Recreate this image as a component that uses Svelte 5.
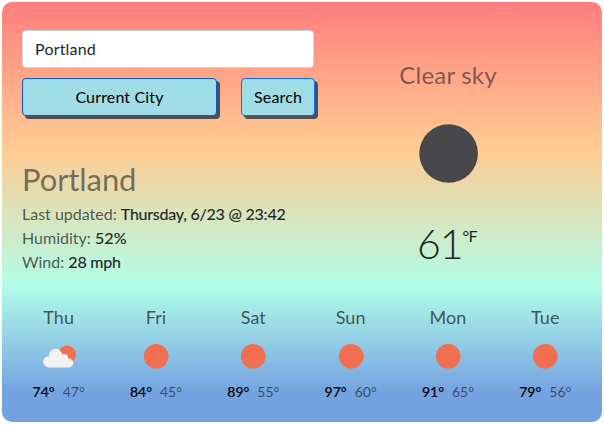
<script>
  let city = $state('Portland');
  const days = [
    { name: 'Thu', high: 74, low: 47, cloudy: true },
    { name: 'Fri', high: 84, low: 45 },
    { name: 'Sat', high: 89, low: 55 },
    { name: 'Sun', high: 97, low: 60 },
    { name: 'Mon', high: 91, low: 65 },
    { name: 'Tue', high: 79, low: 56 }
  ];
</script>

<main class="card">
  <div class="top">
    <section class="left">
      <form onsubmit={(e) => e.preventDefault()}>
        <input type="text" aria-label="City" bind:value={city} />
        <div class="buttons">
          <button type="button" class="current">Current City</button>
          <button type="submit" class="search">Search</button>
        </div>
      </form>
      <h1>Portland</h1>
      <ul>
        <li>Last updated: <span>Thursday, 6/23 @ 23:42</span></li>
        <li>Humidity: <span class="humidity">52%</span></li>
        <li>Wind: <span>28 mph</span></li>
      </ul>
    </section>
    <section class="now">
      <h2>Clear sky</h2>
      <svg class="moon" viewBox="0 0 60 60"><circle cx="30.6" cy="30.5" r="29.3" fill="#48484a" /></svg>
      <div class="temp"><span class="value">61</span><span class="unit">°F</span></div>
    </section>
  </div>
  <section class="forecast">
    {#each days as day}
      <div class="day">
        <h3>{day.name}</h3>
        <svg class="icon" viewBox="0 0 50 50">
          {#if day.cloudy}
            <circle cx="33" cy="23.5" r="9" fill="#f16e51" />
            <g fill="#f2f2f2">
              <circle cx="14.8" cy="30.8" r="5.6" />
              <circle cx="21.6" cy="24.3" r="6.5" />
              <circle cx="30.1" cy="27" r="4" />
              <circle cx="34.8" cy="31.9" r="4.5" />
              <path d="M14.8 27 H22 L31 25 L34.8 29 V36.4 H14.8 z" />
            </g>
          {:else}
            <circle cx="25.2" cy="25.3" r="12.3" fill="#f16e51" />
          {/if}
        </svg>
        <div class="range"><span class="high">{day.high}°</span><span class="low">{day.low}°</span></div>
      </div>
    {/each}
  </section>
</main>

<style>
  :global(body) {
    background: #fff;
  }
  .card, .card * {
    box-sizing: border-box;
  }
  .card {
    width: 600px;
    height: 420px;
    margin: 2px;
    padding: 28px 8px 0;
    border-radius: 10px;
    font-family: Lato, 'Liberation Sans', sans-serif;
    font-size: 16px;
    line-height: 24px;
    color: #212529;
    background: linear-gradient(180deg, #ff7e7e 0%, #ffcc92 35%, #b2fde8 67.5%, #74a2e0 93%);
    display: flow-root;
  }
  .top {
    display: flex;
    height: 274px;
  }
  .left {
    width: 292px;
    padding-left: 12px;
  }
  input {
    display: block;
    width: 292px;
    height: 38px;
    padding: 5px 12px 7px;
    border: 1px solid #ced4da;
    border-radius: 4px;
    background: #fff;
    color: #212529;
    font: inherit;
    letter-spacing: 0.2px;
    outline: none;
  }
  .buttons {
    display: flex;
    gap: 24px;
    width: 293px;
    margin-top: 10px;
  }
  button {
    height: 38px;
    padding: 0;
    border: 1px solid #0d6efd;
    border-radius: 4px;
    background: #a0dce6;
    color: #000;
    font: inherit;
    letter-spacing: 0.15px;
    box-shadow: 3px 3px 0 #4c5054;
  }
  .current {
    width: 195px;
    border-color: #0a58ca;
  }
  .search {
    width: 74px;
  }
  h1, h2, h3, ul {
    margin: 0;
    padding: 0;
    font-weight: 400;
    color: rgba(33, 37, 41, 0.6);
  }
  h1 {
    margin-top: 44px;
    font-size: 31px;
    letter-spacing: -0.1px;
    line-height: 38px;
  }
  ul {
    margin-top: 4px;
    list-style: none;
    color: rgba(33, 37, 41, 0.75);
    white-space: nowrap;
  }
  li span {
    color: #212529;
    letter-spacing: -0.23px;
    -webkit-text-stroke: 0.15px #212529;
  }
  li .humidity {
    letter-spacing: 0.1px;
  }
  .now {
    width: 292px;
    display: flex;
    flex-direction: column;
    align-items: center;
    padding-top: 30px;
  }
  h2 {
    font-size: 24px;
    letter-spacing: 0.2px;
    line-height: 29px;
  }
  .moon {
    width: 60px;
    height: 60px;
    margin-top: 34px;
  }
  .temp {
    display: flex;
    margin-top: 35px;
    padding-right: 2px;
  }
  .value {
    font-size: 41px;
    letter-spacing: -1px;
    line-height: 52px;
    font-weight: 300;
  }
  .unit {
    font-size: 16px;
    letter-spacing: -0.5px;
    line-height: 35px;
  }
  .forecast {
    display: flex;
  }
  .day {
    width: 97.33px;
    display: flex;
    flex-direction: column;
    align-items: center;
  }
  h3 {
    font-size: 18px;
    line-height: 27px;
    letter-spacing: 0.1px;
    color: rgba(33, 37, 41, 0.75);
  }
  .icon {
    width: 50px;
    height: 50px;
  }
  .range {
    display: flex;
    gap: 8px;
    font-size: 14px;
    line-height: 21px;
  }
  .high {
    color: #000;
    -webkit-text-stroke: 0.2px #000;
  }
  .low {
    color: rgba(33, 37, 41, 0.7);
  }
</style>
